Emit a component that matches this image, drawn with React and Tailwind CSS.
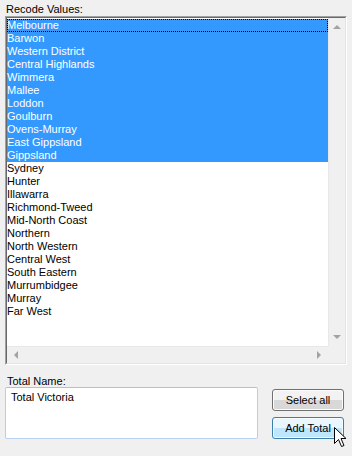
import React from 'react';

const regions = [
  'Melbourne', 'Barwon', 'Western District', 'Central Highlands', 'Wimmera', 'Mallee',
  'Loddon', 'Goulburn', 'Ovens-Murray', 'East Gippsland', 'Gippsland', 'Sydney', 'Hunter',
  'Illawarra', 'Richmond-Tweed', 'Mid-North Coast', 'Northern', 'North Western',
  'Central West', 'South Eastern', 'Murrumbidgee', 'Murray', 'Far West',
];
const selectedCount = 11;

const Arrow = ({ dir }) => {
  const pts = {
    up: '4,1 8,5 0,5',
    down: '0,1 8,1 4,5',
    left: '5,0 5,8 1,4',
    right: '1,0 1,8 5,4',
  }[dir];
  const vertical = dir === 'up' || dir === 'down';
  return (
    <svg width={vertical ? 9 : 6} height={vertical ? 6 : 9} viewBox={vertical ? '0 0 9 6' : '0 0 6 9'}>
      <polygon points={pts} fill="#a3a3a3" />
    </svg>
  );
};

const App = () => {
  return (
    <div
      className="relative w-[352px] h-[456px] bg-[#f0f0f0] text-[11px] text-black overflow-hidden"
      style={{ fontFamily: '"Liberation Sans", Arial, sans-serif' }}
    >
      <div className="pl-[6px] pt-[3px] leading-[13px]">Recode Values:</div>

      <div className="ml-[5px] w-[342px] h-[349px] border border-t-[#a0a0a0] border-l-[#a0a0a0] border-r-white border-b-white">
        <div className="w-full h-full border border-t-[#696969] border-l-[#696969] border-r-[#e3e3e3] border-b-[#e3e3e3] bg-white flex flex-col">
          <div className="flex flex-1 min-h-0">
            <div className="flex-1 flex flex-col pt-[1px]">
              {regions.map((r, i) => (
                <div
                  key={r}
                  className={`h-[13px] leading-[13px] ${
                    i < selectedCount ? 'bg-[#3399ff] text-white' : ''
                  } ${i === 0 ? 'outline outline-1 outline-dotted outline-black -outline-offset-1' : ''}`}
                >
                  {r}
                </div>
              ))}
            </div>
            <div className="w-[17px] bg-[#f0f0f0] border-l border-[#e8e8e8] flex flex-col justify-between items-center py-[6px]">
              <Arrow dir="up" />
              <Arrow dir="down" />
            </div>
          </div>
          <div className="flex h-[17px]">
            <div className="flex-1 bg-[#f0f0f0] border-t border-[#e8e8e8] flex items-center justify-between px-[6px]">
              <Arrow dir="left" />
              <Arrow dir="right" />
            </div>
            <div className="w-[17px] bg-[#f0f0f0]" />
          </div>
        </div>
      </div>

      <div className="pl-[7px] mt-[10px] leading-[13px]">Total Name:</div>

      <div className="flex mt-[-1px] pl-[5px]">
        <div className="w-[253px] h-[52px] bg-white border border-t-[#a3c4e3] border-l-[#b5cfe7] border-r-[#b5cfe7] border-b-[#b7d3ef] rounded-[2px] px-[5px] pt-[3px] leading-[13px]">
          Total Victoria
        </div>
        <div className="ml-[14px] mt-[2px] flex flex-col gap-[6px]">
          <button className="w-[72px] h-[22px] rounded-[3px] border border-[#707070] bg-gradient-to-b from-[#f2f2f2] from-50% to-[#d8d8d8] to-50% text-[11px] leading-[20px] shadow-[inset_0_0_0_1px_#fcfcfc]">
            Select all
          </button>
          <button className="w-[72px] h-[22px] rounded-[3px] border border-[#3c7fb1] bg-gradient-to-b from-[#eaf6fd] from-50% to-[#bee6fd] to-50% text-[11px] leading-[20px] shadow-[inset_0_0_0_1px_#f5fbfe]">
            Add Total
          </button>
        </div>
      </div>

      <svg className="absolute left-[334px] top-[427px]" width="13" height="21" viewBox="0 0 13 21">
        <path
          d="M0.5 0.5 L0.5 16.5 L4.5 12.5 L7.5 19.5 L10 18.5 L7 11.5 L12 11.5 Z"
          fill="white"
          stroke="black"
          strokeWidth="1"
          strokeLinejoin="miter"
        />
      </svg>
    </div>
  );
};

export default App;
